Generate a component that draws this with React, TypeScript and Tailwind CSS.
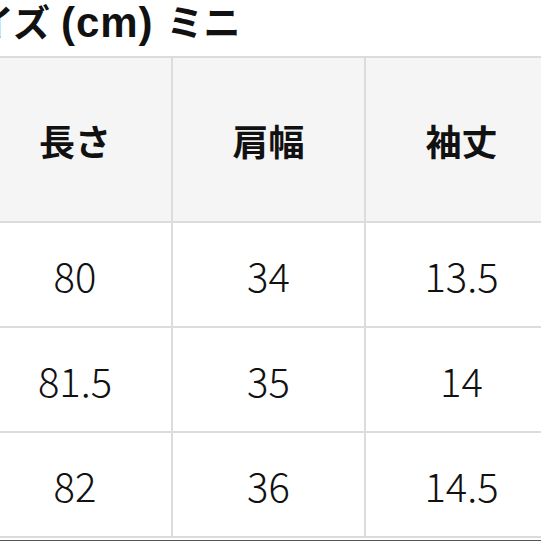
import React from "react";

const headers = ["長さ", "肩幅", "袖丈"];
const rows = [
  ["80", "34", "13.5"],
  ["81.5", "35", "14"],
  ["82", "36", "14.5"],
];

export default function App() {
  return (
    <div
      className="w-[541px] h-[541px] overflow-hidden bg-white flex flex-col"
      style={{ fontFamily: '"Noto Sans CJK JP", "Noto Sans", sans-serif' }}
    >
      <div className="h-[56px] flex items-end pb-[12px] shrink-0">
        <div className="ml-[-60px] flex items-baseline font-bold leading-none text-[#111] whitespace-nowrap">
          <span className="text-[37px]">サイズ</span>
          <span
            className="text-[42px] ml-[11px] tracking-[1px]"
            style={{ fontFamily: '"Liberation Sans", Arial, sans-serif' }}
          >
            (cm)
          </span>
          <span className="text-[37px] ml-[13px]">ミニ</span>
        </div>
      </div>
      <div className="ml-[-21px] grid grid-cols-[192px_191px_191px] grid-rows-[163px_103px_103px_103px] gap-[2px] bg-[#dcdcdc] py-[2px] w-[580px] shrink-0">
        {headers.map((h) => (
          <div
            key={h}
            className="bg-[#f5f5f5] flex items-center justify-center text-[36px] font-bold text-[#111]"
          >
            {h}
          </div>
        ))}
        {rows.flat().map((v, i) => (
          <div
            key={i}
            className="bg-white flex items-center justify-center text-[40px] font-light text-[#111]"
          >
            {v}
          </div>
        ))}
      </div>
      <div className="h-[2px] shrink-0 bg-white" />
      <div className="h-[1px] shrink-0 bg-[#555]" />
    </div>
  );
}
